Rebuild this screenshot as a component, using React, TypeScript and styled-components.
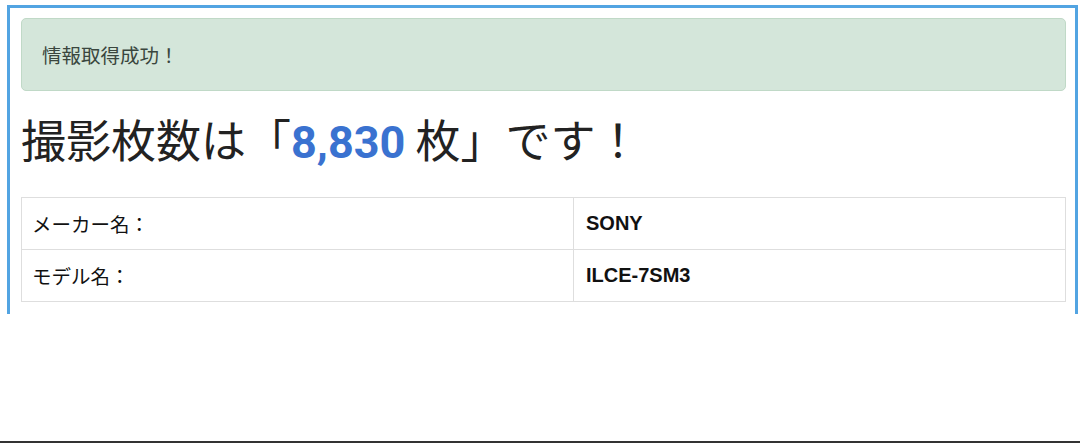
import React from 'react';
import styled, { createGlobalStyle } from 'styled-components';

const GlobalStyle = createGlobalStyle`
  html, body {
    margin: 0;
    padding: 0;
    background: #fff;
  }
  body {
    font-family: "Noto Sans CJK JP", "Liberation Sans", sans-serif;
    color: #222;
  }
`;

const Page = styled.div`
  height: 443px;
  display: flex;
  flex-direction: column;
  overflow: hidden;
`;

const Frame = styled.div`
  margin: 5px 2px 0 7px;
  border: 3px solid #52a4e2;
  border-bottom: none;
  padding: 10px 9px 12px 11px;
  background: #fff;
`;

const Alert = styled.div`
  background: #d4e6da;
  border: 1px solid #c0d9c7;
  border-radius: 5px;
  padding: 22px 20px;
  font-size: 19.5px;
  line-height: 27px;
  color: #3a463e;
`;

const Heading = styled.h1`
  margin: 24px 0 30px;
  font-size: 45px;
  line-height: 48px;
  font-weight: 400;
  color: #222;
`;

const Count = styled.span`
  font-family: "Roboto", "Liberation Sans", sans-serif;
  font-weight: 700;
  color: #3a72d0;
`;

const Table = styled.table`
  width: 100%;
  table-layout: fixed;
  border-collapse: collapse;
`;

const Cell = styled.td<{ $bold?: boolean }>`
  border: 1px solid #dedede;
  padding: 12px 11px 12px ${({ $bold }) => ($bold ? '12px' : '10px')};
  height: 27px;
  line-height: 27px;
  font-family: ${({ $bold }) => ($bold ? '"Liberation Sans", Arial, sans-serif' : 'inherit')};
  font-size: ${({ $bold }) => ($bold ? '20px' : '19.5px')};
  font-weight: ${({ $bold }) => ($bold ? 700 : 400)};
  color: #111;
`;

const Spacer = styled.div`
  flex: 1;
`;

const BottomLine = styled.div`
  height: 2px;
  background: #333;
`;

const rows = [
  { label: 'メーカー名：', value: 'SONY' },
  { label: 'モデル名：', value: 'ILCE-7SM3' },
];

const App = () => (
  <>
    <GlobalStyle />
    <Page>
      <Frame>
        <Alert>情報取得成功！</Alert>
        <Heading>
          撮影枚数は「<Count>8,830</Count> 枚」です！
        </Heading>
        <Table>
          <colgroup>
            <col style={{ width: 552 }} />
            <col />
          </colgroup>
          <tbody>
            {rows.map(({ label, value }) => (
              <tr key={label}>
                <Cell>{label}</Cell>
                <Cell $bold>{value}</Cell>
              </tr>
            ))}
          </tbody>
        </Table>
      </Frame>
      <Spacer />
      <BottomLine />
    </Page>
  </>
);

export default App;
